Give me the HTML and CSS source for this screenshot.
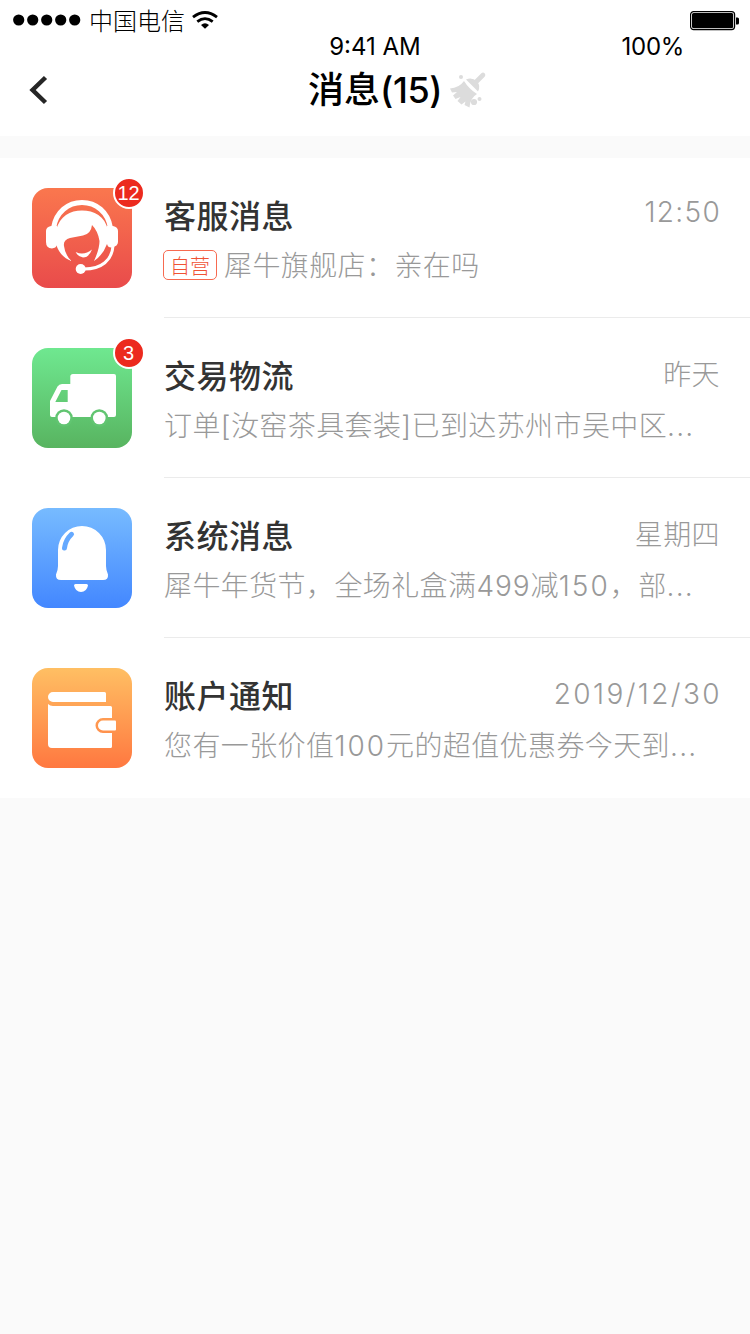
FILE: index.html
```html
<!DOCTYPE html>
<html lang="zh-CN">
<head>
<meta charset="utf-8">
<title>消息</title>
<link rel="stylesheet" href="styles.css">
</head>
<body>
<header class="header">
  <div class="status">
    <div class="carrier">
      <svg class="dots" width="68" height="12" viewBox="0 0 68 12"><circle cx="5.7" cy="6" r="5.6"/><circle cx="19.7" cy="6" r="5.6"/><circle cx="33.7" cy="6" r="5.6"/><circle cx="47.7" cy="6" r="5.6"/><circle cx="61.7" cy="6" r="5.6"/></svg>
      <span class="carrier-name">中国电信</span>
      <svg class="wifi" width="26" height="18" viewBox="0 0 26 18"><path d="M1 6.2Q13-3.200 25 6.2M5.3 10.6Q13 4.600 20.7 10.6" fill="none" stroke="#000" stroke-width="2.8"/><path d="M9 13.9Q13 10.6 17 13.9L13 17.8Z"/></svg>
    </div>
    <span class="clock">9:41 AM</span>
    <div class="power">
      <svg class="battery" width="50" height="20" viewBox="0 0 50 20"><rect x=".6" y=".6" width="44" height="18" rx="3" fill="none" stroke="#000" stroke-width="1.2"/><rect x="2" y="2" width="41.2" height="15.2" rx="1.6"/><path d="M46 6.500h1.500q1.500 0 1.500 1.500v4q0 1.500-1.500 1.500H46z"/></svg>
      <span class="percent">100%</span>
    </div>
  </div>
  <div class="nav">
    <svg class="back" width="20" height="30" viewBox="0 0 20 30"><path d="M16.500 2.500L3.600 15l12.900 12.500" fill="none" stroke="#262626" stroke-width="4.500"/></svg>
    <h1 class="heading">消息<span class="count">(15)</span></h1>
    <svg class="broom" width="38" height="38" viewBox="0 0 38 38"><path d="M26.500 11.500L34 4" fill="none" stroke="#dcdcdc" stroke-width="4.600" stroke-linecap="round"/><path d="M17 8.500Q23 6 28 10.500Q32 15 29 20.500Z"/><path d="M15 10Q20 18 28 23Q21 27 20.500 36.500L15.500 34 16.500 30.500 12.500 33.500 8.500 30 11.500 26 6.500 28 4 24.500 8 21 3 21.500 1 17.500Q10 17 15 10Z"/><circle cx="12" cy="6" r="2"/><circle cx="25" cy="31" r="3.100"/><circle cx="30.500" cy="28" r="2"/></svg>
  </div>
</header>
<main class="list">
  <article class="row">
    <div class="tile">
      <svg class="icon" viewBox="0 0 100 100"><defs><linearGradient id="red" x2="0" y2="1"><stop stop-color="#fa774e"/><stop offset="1" stop-color="#e94b4b"/></linearGradient></defs><rect width="100" height="100" rx="16" fill="url(#red)"/>
      <path d="M21.500 40C24 24 36 14.500 50 14.500S76 24 78.500 40" fill="none" stroke="#fff" stroke-width="5"/><path d="M25 38v19q-1 3-5 3.500Q14 60 14 54V43q0-4 5-5zM75 38v18q1 4 5 3.500Q86 58 86 54V43q0-4-5-5z"/><path d="M24 42C28 28 38 22.500 50 22.500S73 28 76 42L75 56Q71 67 62 73Q67.500 61 67.500 53Q66 43 60 37Q59 46 51 47.500L38 50Q31 52 32 58Q33 67 39.500 73Q28 69 24 56Z"/><path d="M43.700 64Q52 68 60 61.500Q57 69.500 51 69.500Q46 69 43.700 64Z"/><path d="M81 58C80 72 70 81 52 81" fill="none" stroke="#fff" stroke-width="3"/><circle cx="48.700" cy="81" r="5"/></svg>
      <span class="badge">12</span>
    </div>
    <div class="body"><div class="line"><h2 class="title">客服消息</h2><time class="time clock-time">12:50</time></div><p class="desc"><span class="tag">自营</span>犀牛旗舰店：亲在吗</p></div>
  </article>
  <article class="row">
    <div class="tile">
      <svg class="icon" viewBox="0 0 100 100"><defs><linearGradient id="green" x2="0" y2="1"><stop stop-color="#6fe890"/><stop offset="1" stop-color="#58b460"/></linearGradient></defs><rect width="100" height="100" rx="16" fill="url(#green)"/>
      <path fill-rule="evenodd" d="M41 26H82q2 0 2 2V67q0 2-2 2H20q-2 0-2-2V53L25.500 38.500Q27 36 30 36H38.300V28.500Q38.300 26 41 26ZM23.300 54H35.700V42H29.500Z"/><g fill="#61c571"><circle cx="32" cy="70" r="8.800"/><circle cx="67.300" cy="70" r="8.800"/></g><circle cx="32" cy="70" r="6.300"/><circle cx="67.300" cy="70" r="6.300"/></svg>
      <span class="badge">3</span>
    </div>
    <div class="body"><div class="line"><h2 class="title">交易物流</h2><time class="time">昨天</time></div><p class="desc">订单[汝窑茶具套装]已到达苏州市吴中区<span class="dots-end">...</span></p></div>
  </article>
  <article class="row">
    <div class="tile">
      <svg class="icon" viewBox="0 0 100 100"><defs><linearGradient id="blue" x2="0" y2="1"><stop stop-color="#77bbff"/><stop offset="1" stop-color="#4387ff"/></linearGradient></defs><rect width="100" height="100" rx="16" fill="url(#blue)"/>
      <path d="M26 42a24 24 0 0 1 48 0V58Q74 62 76 66.500Q76.500 72 71 72H29Q23.500 72 24 66.500Q26 62 26 58Z"/><path d="M32.500 40Q33.500 32 39.500 26.300" fill="none" stroke="#65a9ff" stroke-width="5" stroke-linecap="round"/><path d="M43.500 76h11q1.500 0 1.500 1.500Q54.500 84 49 84T42 77.500Q42 76 43.500 76Z"/></svg>
    </div>
    <div class="body"><div class="line"><h2 class="title">系统消息</h2><time class="time">星期四</time></div><p class="desc">犀牛年货节，全场礼盒满<span class="num">499</span>减<span class="num narrow">150</span>，部<span class="dots-end">...</span></p></div>
  </article>
  <article class="row">
    <div class="tile">
      <svg class="icon" viewBox="0 0 100 100"><defs><linearGradient id="orange" x2="0" y2="1"><stop stop-color="#ffbf63"/><stop offset="1" stop-color="#ff7840"/></linearGradient></defs><rect width="100" height="100" rx="16" fill="url(#orange)"/>
      <path d="M21 24H72.500Q74 24 74 25.500V34H21a5 5 0 0 1 0-10ZM16 36Q18 38 21 38H78.500Q80 38 80 39.500V50H71a7.500 7.500 0 0 0 0 15H80V78.500Q80 80 78.500 80H20q-4 0-4-4Z"/><path d="M71 52.500H83q1 0 1 1v8q0 1-1 1H71a5 5 0 0 1 0-10Z"/></svg>
    </div>
    <div class="body"><div class="line"><h2 class="title">账户通知</h2><time class="time date">2019/12/30</time></div><p class="desc">您有一张价值<span class="num narrow">100</span>元的超值优惠券今天到<span class="dots-end">...</span></p></div>
  </article>
</main>
</body>
</html>
```

FILE: styles.css
```css
* { box-sizing: border-box; }
body { margin: 0; min-height: 1334px; background: #fafafa; font-family: Inter, "Noto Sans CJK SC", sans-serif; color: #000; }
svg { display: block; }
h1, h2, p { margin: 0; }
.header { height: 136px; background: #fff; }
.status { display: grid; grid-template-columns: 1fr auto 1fr; height: 60px; }
.carrier { display: flex; align-items: center; height: 40px; padding-left: 13px; }
.carrier-name { font-size: 24px; font-weight: 300; line-height: 40px; margin-left: 8px; padding-top: 3px; }
.wifi { margin-left: 7px; }
.clock { font-size: 24px; line-height: 28px; margin-top: 33px; }
.power { display: flex; flex-direction: column; align-items: flex-end; padding: 11px 10px 0 0; }
.percent { font-size: 24px; line-height: 28px; margin: 2px 56px 0 0; letter-spacing: -.3px; }
.nav { display: flex; align-items: center; height: 60px; padding-left: 29px; }
.heading { margin-left: 259px; font-size: 36px; font-weight: 500; line-height: 60px; white-space: nowrap; }
.count { letter-spacing: -.4px; }
.broom { margin-left: 7px; fill: #dcdcdc; }
.list { margin-top: 22px; background: #fff; }
.row { display: flex; height: 160px; padding-left: 32px; }
.tile { position: relative; width: 100px; height: 100px; margin: 30px 32px 0 0; flex: none; }
.icon { width: 100px; height: 100px; fill: #fff; }
.badge { position: absolute; top: -11px; right: -13px; width: 32px; height: 32px; padding-right: 1px; border: 2px solid #fff; border-radius: 50%; background: #ec2a1e; color: #fff; font-family: "Liberation Sans", sans-serif; font-size: 20px; line-height: 28px; text-align: center; }
.body { flex: 1; min-width: 0; padding: 36px 30px 0 0; border-bottom: 1px solid #ebebeb; }
.row:last-child .body { border-bottom: 0; }
.line { display: flex; justify-content: space-between; height: 46px; line-height: 46px; }
.title { font-size: 32px; font-weight: 500; letter-spacing: .5px; color: #333; }
.time { font-size: 28px; font-weight: 300; color: #999; letter-spacing: .4px; line-height: 42px; }
.clock-time { line-height: 37px; letter-spacing: 1.3px; margin-right: -1px; }
.date { line-height: 40px; letter-spacing: 2.4px; margin-right: -2px; }
.desc { display: flex; align-items: center; height: 40px; margin-top: 6px; font-size: 28px; font-weight: 300; line-height: 40px; letter-spacing: .4px; color: #999; white-space: nowrap; }
.num { letter-spacing: .9px; }
.narrow { letter-spacing: 2px; }
.dots-end { letter-spacing: 1.2px; }
.tag { width: 54px; height: 30px; margin: -2px 7px 0 -1px; padding-top: 1px; border: 1px solid #f76a50; border-radius: 5px; color: #f05234; font-size: 20px; line-height: 30px; text-align: center; letter-spacing: 0; }
```
